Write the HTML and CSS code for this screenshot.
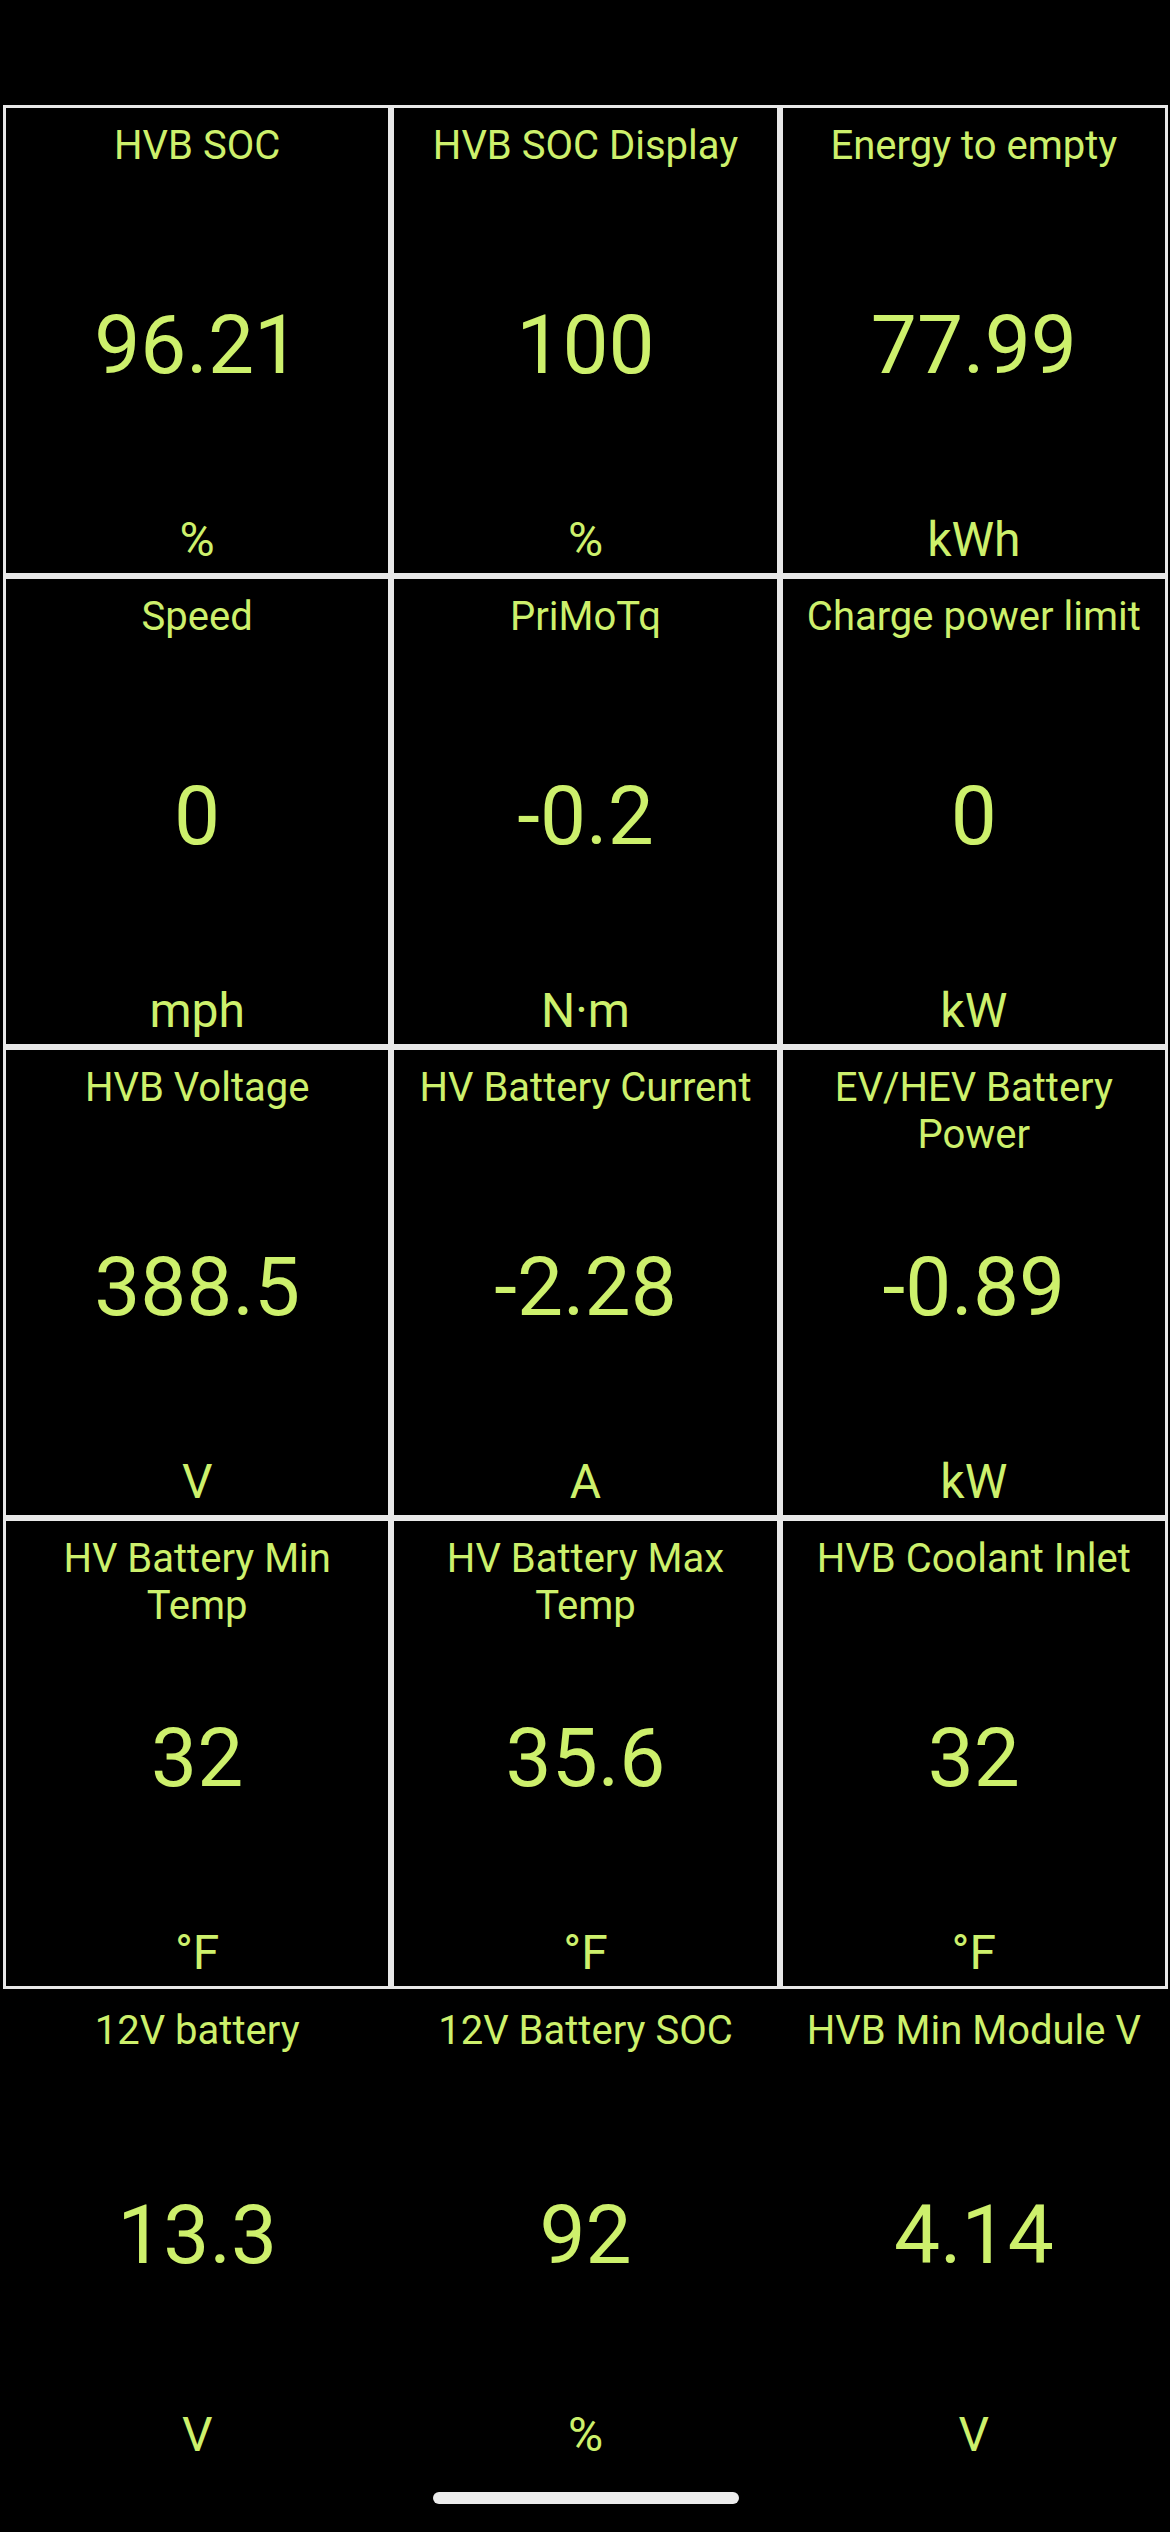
FILE: index.html
```html
<!DOCTYPE html>
<html lang="en">
<head>
<meta charset="utf-8">
<title>Dashboard</title>
<link rel="stylesheet" href="styles.css">
</head>
<body>
<div class="screen">
  <div class="status-bar"></div>
  <main class="grid">
    <div class="cell"><div class="title">HVB SOC</div><div class="value">96.21</div><div class="unit">%</div></div>
    <div class="cell"><div class="title">HVB SOC Display</div><div class="value">100</div><div class="unit">%</div></div>
    <div class="cell"><div class="title">Energy to empty</div><div class="value">77.99</div><div class="unit">kWh</div></div>

    <div class="cell"><div class="title">Speed</div><div class="value">0</div><div class="unit">mph</div></div>
    <div class="cell"><div class="title">PriMoTq</div><div class="value">-0.2</div><div class="unit">N·m</div></div>
    <div class="cell"><div class="title">Charge power limit</div><div class="value">0</div><div class="unit">kW</div></div>

    <div class="cell"><div class="title">HVB Voltage</div><div class="value">388.5</div><div class="unit">V</div></div>
    <div class="cell"><div class="title">HV Battery Current</div><div class="value">-2.28</div><div class="unit">A</div></div>
    <div class="cell"><div class="title">EV/HEV Battery Power</div><div class="value">-0.89</div><div class="unit">kW</div></div>

    <div class="cell"><div class="title">HV Battery Min Temp</div><div class="value">32</div><div class="unit">°F</div></div>
    <div class="cell"><div class="title">HV Battery Max Temp</div><div class="value">35.6</div><div class="unit">°F</div></div>
    <div class="cell"><div class="title">HVB Coolant Inlet</div><div class="value">32</div><div class="unit">°F</div></div>

    <div class="cell cell-open"><div class="title">12V battery</div><div class="value">13.3</div><div class="unit">V</div></div>
    <div class="cell cell-open"><div class="title">12V Battery SOC</div><div class="value">92</div><div class="unit">%</div></div>
    <div class="cell cell-open"><div class="title">HVB Min Module V</div><div class="value">4.14</div><div class="unit">V</div></div>
  </main>
  <div class="home-indicator"></div>
</div>
</body>
</html>
```
FILE: styles.css
```css
html, body {
  margin: 0;
  padding: 0;
  background: #000;
}

body {
  font-family: Roboto, "Noto Sans", "Liberation Sans", sans-serif;
  color: #cdf06c;
}

.screen {
  position: relative;
  width: 1170px;
  height: 2532px;
  overflow: hidden;
  background: #000;
}

.status-bar {
  height: 105px;
}

.grid {
  display: grid;
  grid-template-columns: repeat(3, 1fr);
  padding: 0 2px 0 3px;
}

.cell {
  box-sizing: border-box;
  height: 471px;
  border: 3px solid #e8e8e8;
  padding: 14px 4px 5px;
  display: grid;
  grid-template-rows: 1fr auto 1fr;
  text-align: center;
  min-width: 0;
}

.cell-open {
  height: 482px;
  padding-top: 15px;
  border-color: transparent;
}

.title {
  align-self: start;
  font-size: 40px;
  line-height: 47px;
}

.value {
  align-self: center;
  font-size: 82px;
  line-height: 96px;
}

.unit {
  align-self: end;
  font-size: 48px;
  line-height: 56px;
}

.home-indicator {
  position: absolute;
  left: 433px;
  top: 2492px;
  width: 306px;
  height: 12px;
  border-radius: 6px;
  background: #ececec;
}
```
